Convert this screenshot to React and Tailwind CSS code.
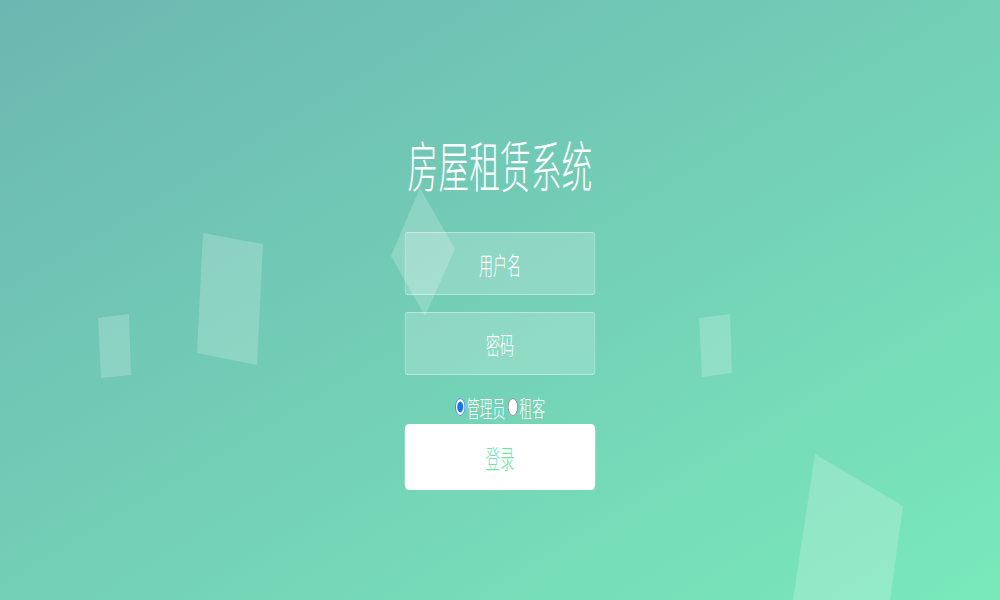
import React, { useState } from "react";

const shapes = [
    "420,188 455,249 425,316 391,256",
    "203,233 263,244 257,365 197,353",
    "98,318 129,314 131,375 101,378",
    "699,318 730,314 732,373 702,377",
    "815,454 903,506 890,600 793,600",
];

export default function App() {
    const [role, setRole] = useState("admin");

    return (
        <div
            className="relative h-[600px] w-full overflow-hidden bg-gradient-to-br from-[#6cb7b1] via-[#73cfb6] to-[#79e9bb]"
            style={{ fontFamily: '"Noto Sans CJK SC", "Noto Sans", sans-serif' }}
        >
            <svg className="absolute inset-0 h-full w-full" viewBox="0 0 1000 600" preserveAspectRatio="none">
                {shapes.map((p) => (
                    <polygon key={p} points={p} fill="#ffffff" fillOpacity="0.2" />
                ))}
            </svg>

            <div className="relative flex flex-col items-center pt-[135px]">
                <div className="flex w-[340px] scale-x-[0.56] flex-col items-center">
                    <h1 className="whitespace-nowrap text-[55px] font-light leading-[56px] text-white">房屋租赁系统</h1>

                    <input
                        type="text"
                        placeholder="用户名"
                        className="mt-[41px] h-[63px] w-full rounded-[5px] border border-white/40 bg-white/20 text-center text-[25px] font-light text-white outline-none placeholder:text-white"
                    />
                    <input
                        type="password"
                        placeholder="密码"
                        className="mt-[17px] h-[63px] w-full rounded-[5px] border border-white/40 bg-white/20 text-center text-[25px] font-light text-white outline-none placeholder:text-white"
                    />

                    <div className="mt-[20px] flex h-[24px] items-center whitespace-nowrap text-[23px] font-light leading-none text-white">
                        <label className="flex items-center">
                            <input
                                type="radio"
                                name="role"
                                checked={role === "admin"}
                                onChange={() => setRole("admin")}
                                className="m-0 h-[18px] w-[18px] accent-[#1a73e8]"
                            />
                            <span className="ml-[3px]">管理员</span>
                        </label>
                        <label className="ml-[4px] flex items-center">
                            <input
                                type="radio"
                                name="role"
                                checked={role === "tenant"}
                                onChange={() => setRole("tenant")}
                                className="m-0 h-[18px] w-[18px] accent-[#1a73e8]"
                            />
                            <span className="ml-[3px]">租客</span>
                        </label>
                    </div>

                    <button
                        type="button"
                        className="mt-[5px] h-[66px] w-full rounded-[6px] bg-white text-[26px] font-light text-[#72e4b3]"
                    >
                        登录
                    </button>
                </div>
            </div>
        </div>
    );
}
